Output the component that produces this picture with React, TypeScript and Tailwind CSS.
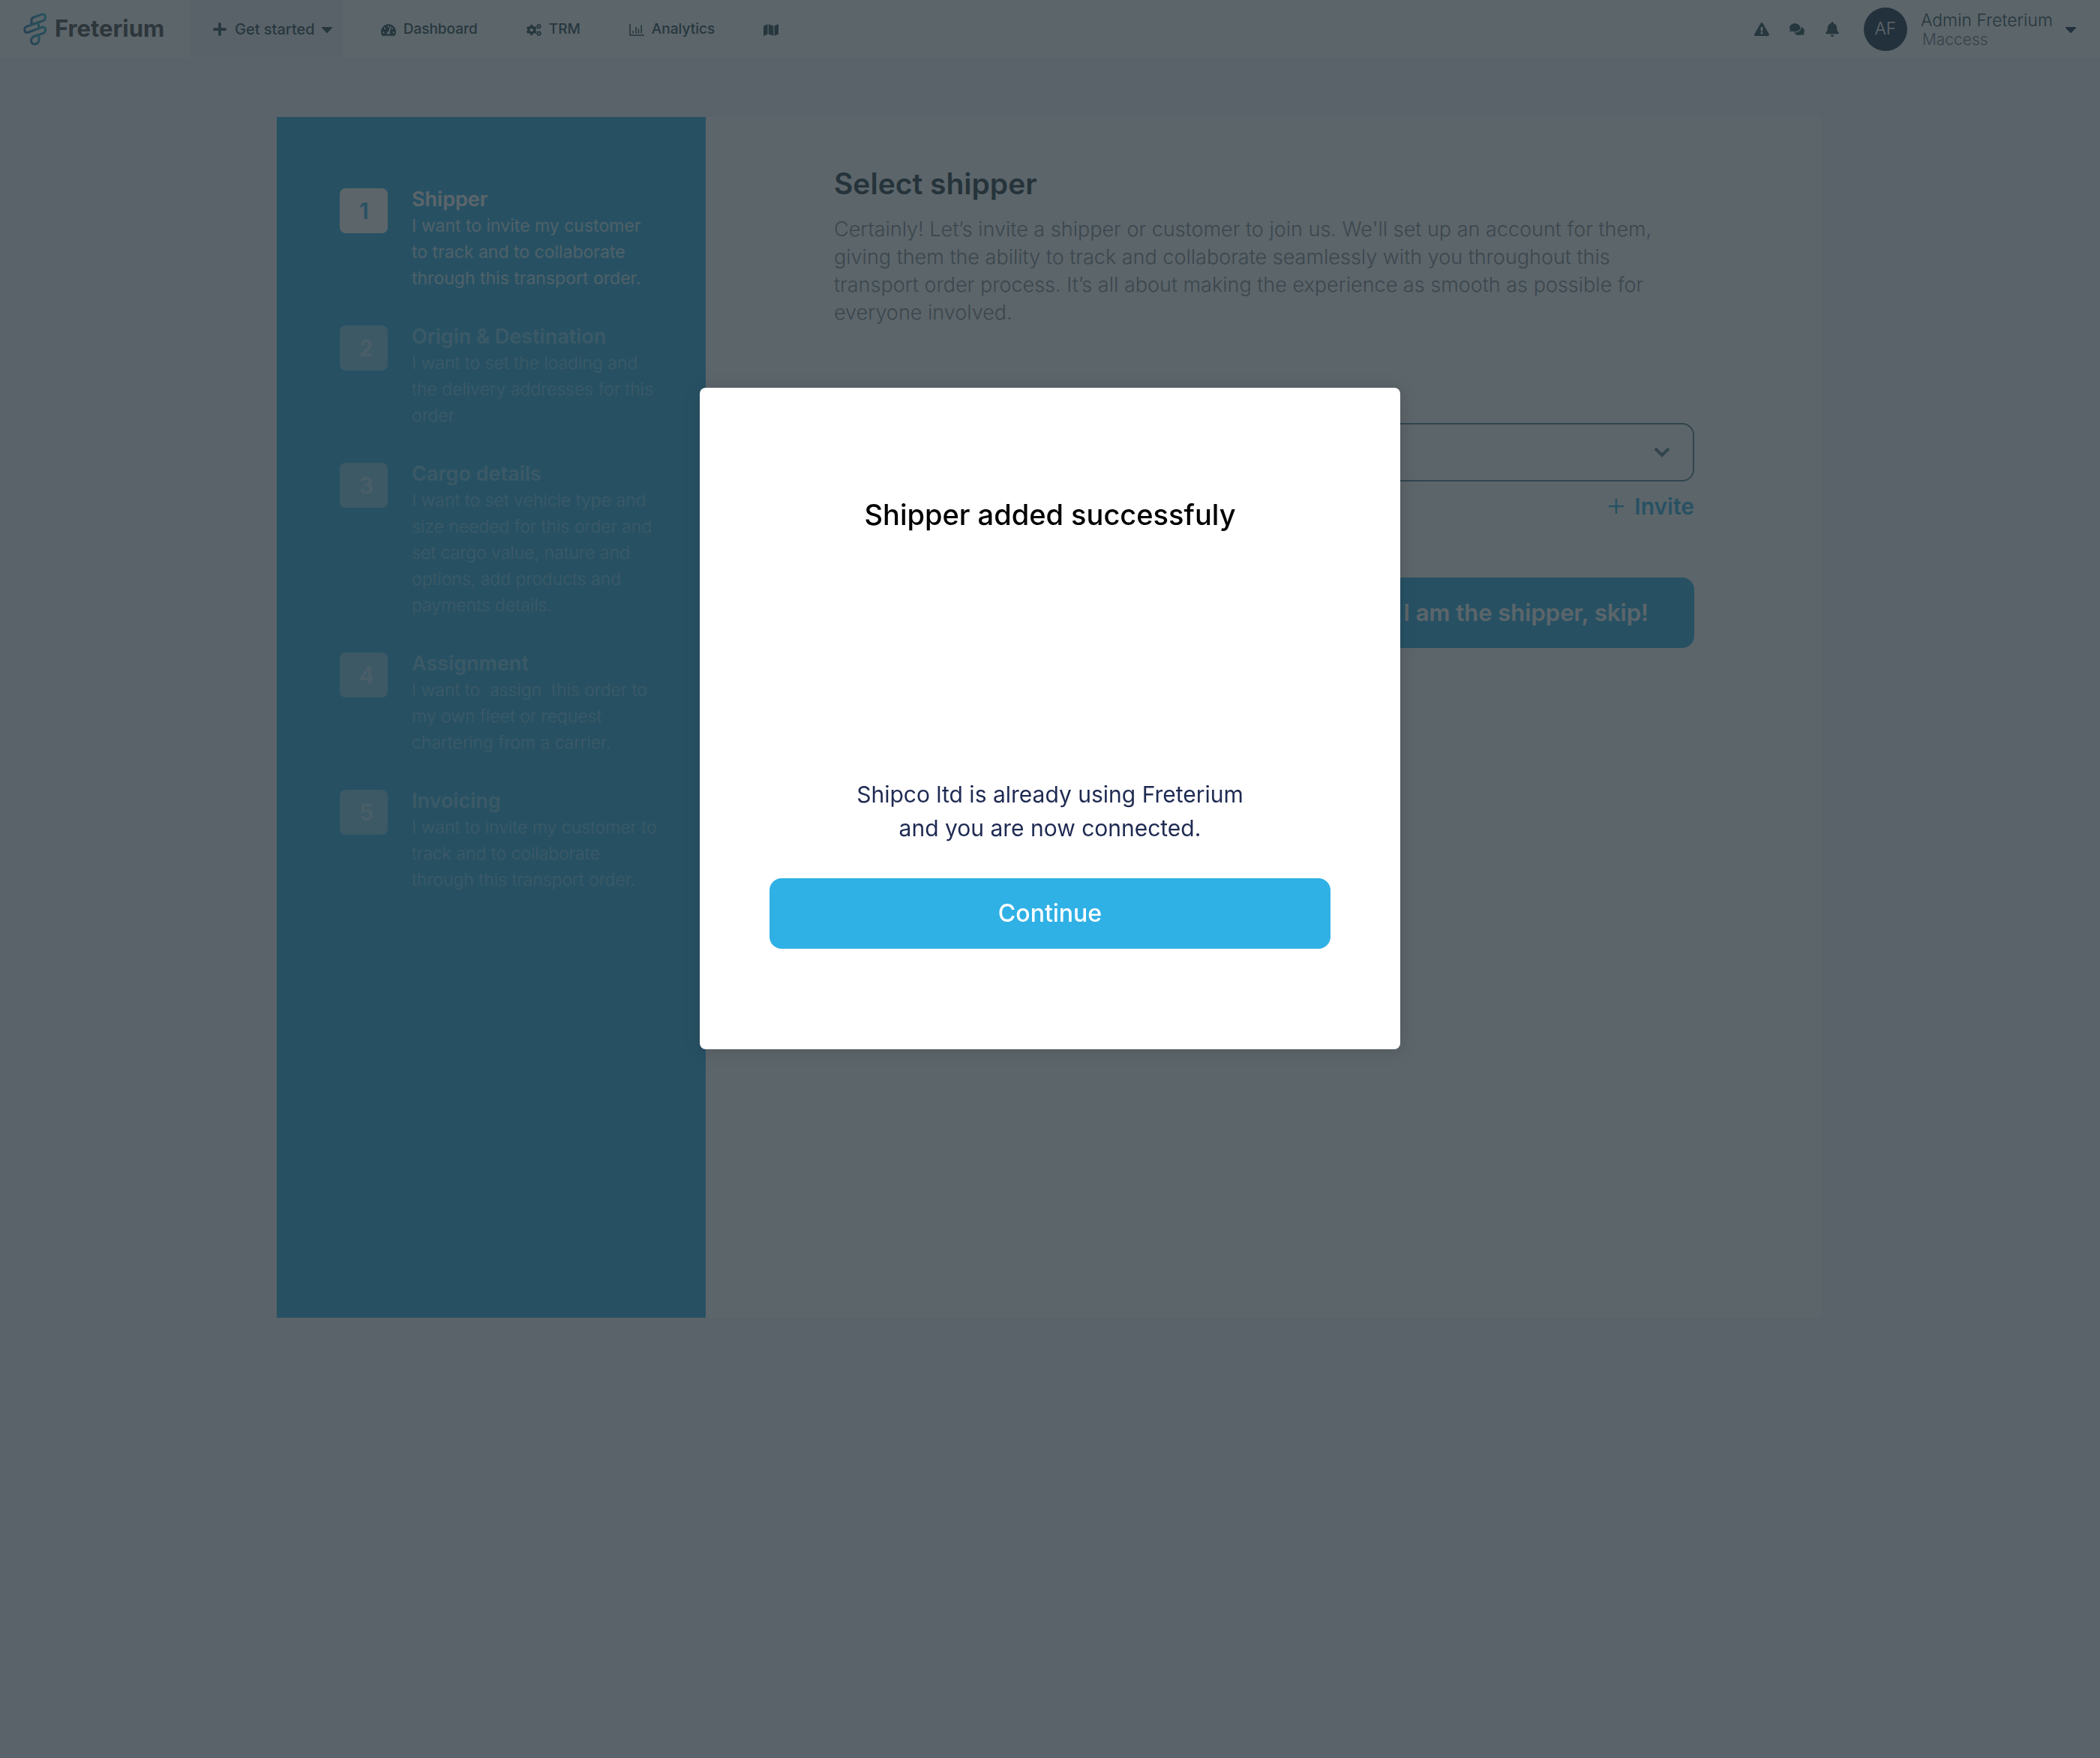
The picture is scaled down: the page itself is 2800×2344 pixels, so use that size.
import { FaTachometerAlt, FaCogs, FaMap, FaExclamationTriangle, FaComments, FaBell, FaPlus, FaCaretDown } from "react-icons/fa";

const steps = [
  { title: "Shipper", lines: ["I want to invite my customer", "to track and to collaborate", "through this transport order."] },
  { title: "Origin & Destination", lines: ["I want to set the loading and", "the delivery addresses for this", "order"] },
  {
    title: "Cargo details",
    lines: [
      "I want to set vehicle type and",
      "size needed for this order and",
      "set cargo value, nature and",
      "options, add products and",
      "payments details.",
    ],
  },
  { title: "Assignment", lines: ["I want to  assign  this order to", "my own fleet or request", "chartering from a carrier."] },
  { title: "Invoicing", lines: ["I want to invite my customer to", "track and to collaborate", "through this transport order."] },
];

function Logo() {
  return (
    <svg viewBox="0 0 32 44" className="h-11 w-8" fill="none" strokeWidth="3" strokeLinejoin="round">
      <defs>
        <linearGradient id="brand" x1="0" y1="1" x2="1" y2="0">
          <stop offset="0" stopColor="#2a6fb0" />
          <stop offset="1" stopColor="#2fb8c0" />
        </linearGradient>
      </defs>
      <g stroke="url(#brand)">
        <path d="M14 6 L25 2.2 Q29.5 1.4 29.5 6 Q29.5 9.6 26.5 10.6 L11 15.6 V9.6 Q11 7 14 6 Z" />
        <path d="M5 18.2 L19 13.6 Q21 14 20.5 16.5 Q20 19.5 22 20.4 L7 26 Q2 27.4 1.8 23 Q1.6 19.4 5 18.2 Z" />
        <path d="M21.5 20.4 L26 19 Q30 18.8 29.6 23.5 Q29 26.6 26.5 27.4 L13 31.6" />
        <path d="M13.5 32 L21 29.8 V36.4 Q20.6 41 16 41.8 Q10.8 42.2 10.6 37.5 Q10.6 33.4 13.5 32 Z" />
      </g>
    </svg>
  );
}

function ChartIcon() {
  return (
    <svg viewBox="0 0 20 16" className="h-4 w-5" fill="none" stroke="currentColor" strokeWidth="1.6">
      <path d="M1 0 V15 H20" />
      <path d="M5 12.5 V9 M9 12.5 V4 M12.5 12.5 V6.5 M16.2 12.5 V1.5" />
    </svg>
  );
}

function Header() {
  return (
    <header className="flex h-[77px] items-center justify-between bg-white text-[#2a4a50]">
      <div className="flex h-full items-center">
        <a href="#home" className="flex w-[254px] items-center gap-2.5 pl-[31px] text-[31px] font-bold text-[#454545]">
          <Logo />
          Freterium
        </a>
        <nav className="flex h-full items-center text-[19px] font-medium">
          <button className="flex h-full items-center bg-[#f4f4f8] pr-2.5 pl-[29px] text-xl">
            <FaPlus className="mr-2.5 size-5" />
            Get started
            <FaCaretDown className="ml-1 size-6" />
          </button>
          <div className="flex items-center gap-[65px] pt-0.5 pl-[50px]">
            <a href="#dashboard" className="flex items-center gap-2.5">
              <FaTachometerAlt className="size-5" />
              Dashboard
            </a>
            <a href="#trm" className="flex items-center gap-2.5">
              <FaCogs className="size-5" />
              TRM
            </a>
            <a href="#analytics" className="flex items-center gap-2.5">
              <ChartIcon />
              Analytics
            </a>
            <a href="#map" aria-label="Map">
              <FaMap className="size-5" />
            </a>
          </div>
        </nav>
      </div>
      <div className="flex items-center pr-[27px]">
        <div className="flex gap-[27px]">
          <button aria-label="Alerts"><FaExclamationTriangle className="size-5" /></button>
          <button aria-label="Messages"><FaComments className="size-5" /></button>
          <button aria-label="Notifications"><FaBell className="size-5" /></button>
        </div>
        <div className="ml-8 flex size-[58px] items-center justify-center rounded-full bg-[#1f3349] text-[23px] font-light text-white">AF</div>
        <button className="flex items-center">
          <span className="ml-[18px] flex flex-col pt-0.5 text-left text-[23px] leading-[26px] font-light">
            Admin Freterium
            <span className="pl-0.5 text-[21px] leading-[26px] text-[#6a7078]">Maccess</span>
          </span>
          <FaCaretDown className="ml-3 size-6 text-[#1f3349]" />
        </button>
      </div>
    </header>
  );
}

function Steps() {
  return (
    <ol className="flex w-[572px] shrink-0 flex-col gap-[42px] bg-[#2fb0e4] pt-[91px] pl-[84px]">
      {steps.map((step, i) => (
        <li key={step.title} className="flex gap-8">
          <span
            className={
              i === 0
                ? "mt-1 flex h-[60px] w-16 items-center rounded-lg bg-white pl-[26px] text-[30px] font-semibold text-[#2fb0e4]"
                : "mt-1 flex h-[60px] w-16 items-center rounded-lg bg-white/40 pl-[26px] text-[30px] font-semibold text-white/45"
            }
          >
            {i + 1}
          </span>
          <div className={i === 0 ? "text-white" : "text-white/40"}>
            <h2 className="text-[27px] leading-[37px] font-semibold">{step.title}</h2>
            <p className={i === 0 ? "-mb-px text-[23px] leading-[35px] whitespace-pre text-white/75" : "-mb-px text-[23px] leading-[35px] font-light whitespace-pre"}>
              {step.lines.join("\n")}
            </p>
          </div>
        </li>
      ))}
    </ol>
  );
}

function SelectShipper() {
  return (
    <section className="flex-1 bg-white pt-[63px] pr-[169px] pl-[171px]">
      <h1 className="text-[39px] leading-[52px] font-semibold text-[#263b40]">Select shipper</h1>
      <p className="mt-4 text-[27px] leading-[37px] font-light whitespace-pre-line text-[#7e868c]">
        {"Certainly! Let’s invite a shipper or customer to join us. We'll set up an account for them,\ngiving them the ability to track and collaborate seamlessly with you throughout this\ntransport order process. It’s all about making the experience as smooth as possible for\neveryone involved."}
      </p>
      <div className="mt-[129px] flex h-[78px] items-center rounded-2xl border-2 border-[#5a7f8f] pr-[30px]">
        <select aria-label="Shipper" className="h-full flex-1 appearance-none bg-transparent pl-6 text-[27px]" />
        <svg viewBox="0 0 22 14" className="h-3.5 w-[22px]" fill="none" stroke="#5a7f8f" strokeWidth="4">
          <path d="M2 2 L11 11 L20 2" />
        </svg>
      </div>
      <div className="mt-3 flex justify-end">
        <button className="flex items-center gap-3.5 text-[30px] leading-[42px] font-semibold text-[#2fb0e4]">
          <svg viewBox="0 0 20 20" className="size-5" stroke="currentColor" strokeWidth="2.6">
            <path d="M10 0 V20 M0 10 H20" />
          </svg>
          Invite
        </button>
      </div>
      <div className="mt-[74px] flex justify-end">
        <button className="h-[94px] rounded-2xl bg-[#2fb0e4] px-[61px] text-[31px] font-semibold text-white">I am the shipper, skip!</button>
      </div>
    </section>
  );
}

function SuccessDialog() {
  return (
    <div className="fixed inset-0 flex items-start justify-center bg-[#263238]/75 pt-[517px]">
      <div
        role="dialog"
        aria-modal="true"
        aria-labelledby="dialog-title"
        className="w-1/3 rounded-lg bg-white px-[93px] pt-[143px] pb-[134px] text-center shadow-[0_2px_24px_rgba(0,0,0,0.14)]"
      >
        <h2 id="dialog-title" className="text-[38px] leading-[52px] font-medium text-black">Shipper added successfuly</h2>
        <p className="mt-[325px] text-[30px] leading-[45px] text-[#1f2a52]">
          Shipco ltd is already using Freterium
          <br />
          and you are now connected.
        </p>
        <button className="mt-11 h-[94px] w-full rounded-2xl bg-[#30b1e5] text-[32px] font-medium text-white">Continue</button>
      </div>
    </div>
  );
}

export default function App() {
  return (
    <div className="min-h-screen bg-[#f6f8fa] font-['Inter','Noto_Sans',sans-serif]">
      <Header />
      <main className="flex min-h-[1680px] pt-[79px] pr-[372px] pl-[369px]">
        <Steps />
        <SelectShipper />
      </main>
      <SuccessDialog />
    </div>
  );
}
